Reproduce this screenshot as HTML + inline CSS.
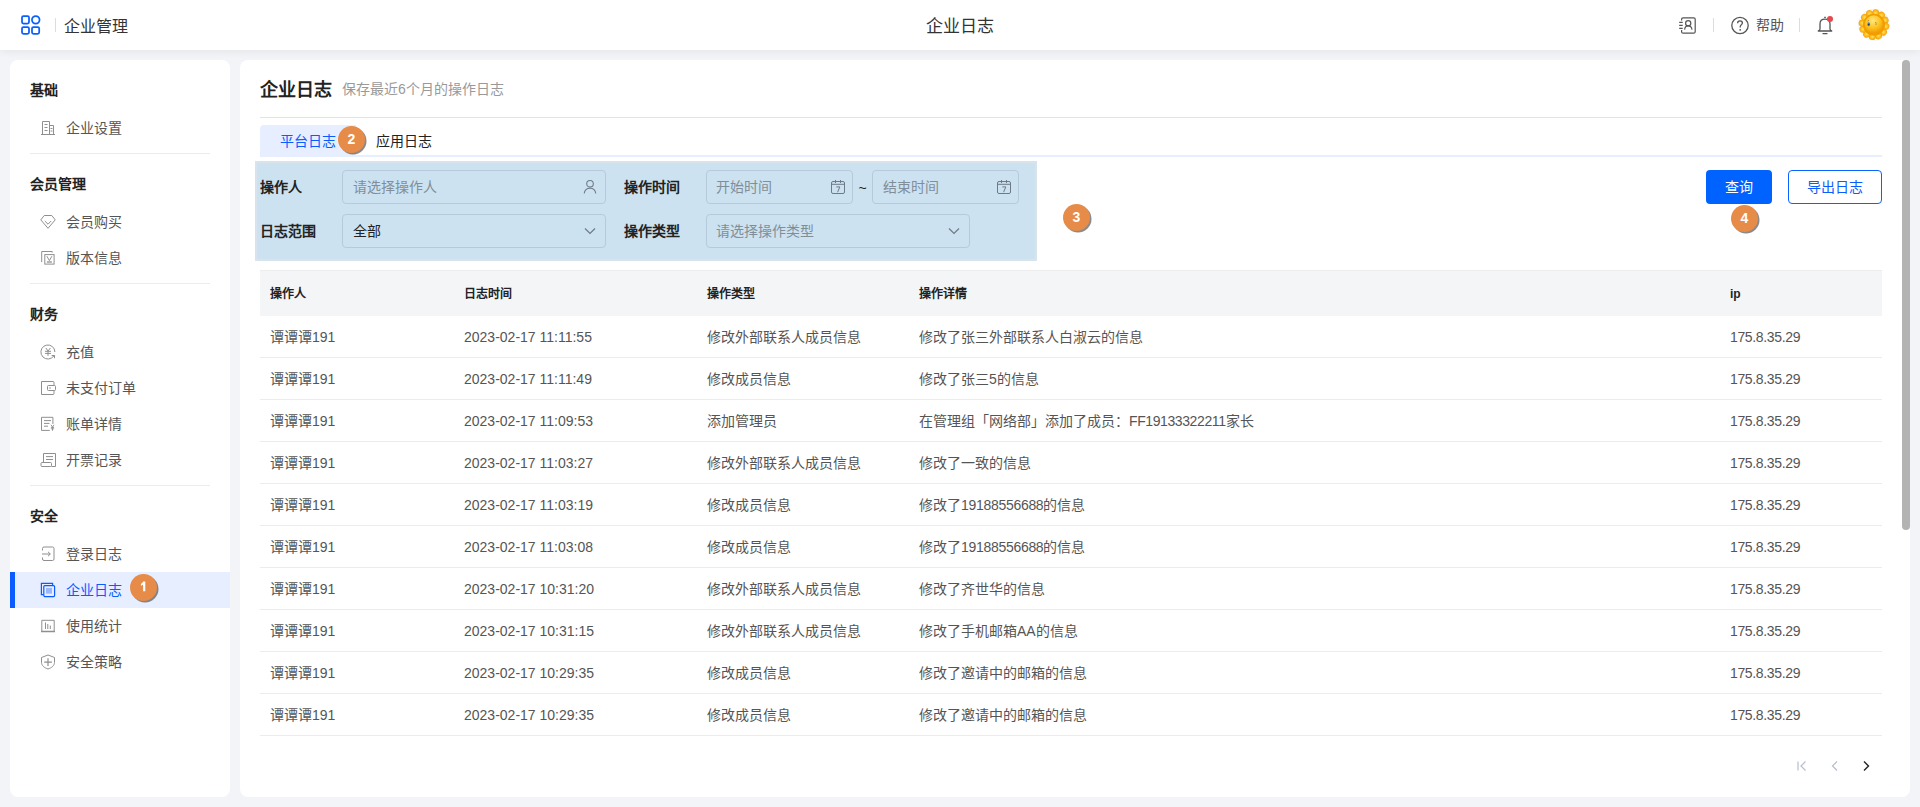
<!DOCTYPE html>
<html lang="zh-CN">
<head>
<meta charset="utf-8">
<style>
*{box-sizing:border-box;margin:0;padding:0}
html,body{width:1920px;height:807px;overflow:hidden}
body{background:#f3f4f8;font-family:"Liberation Sans",sans-serif;color:#333;position:relative}
.abs{position:absolute}
.hdr{left:0;top:0;width:1920px;height:50px;background:#fff;box-shadow:0 2px 8px rgba(0,0,0,.06)}
.t{position:absolute;white-space:nowrap;height:20px;line-height:20px}
.side{left:10px;top:60px;width:220px;height:737px;background:#fff;border-radius:8px}
.main{left:240px;top:60px;width:1670px;height:737px;background:#fff;border-radius:8px}
.sb{left:1902px;top:60px;width:8px;height:470px;background:#b3b3b3;border-radius:4px}
.sec{font-size:14px;font-weight:bold;color:#222}
.item{font-size:14px;color:#555}
.item.act{color:#0a5cff}
.div{position:absolute;height:1px;background:#ececec}
.ico{position:absolute;display:block}
.badge{position:absolute;width:27px;height:27px;border-radius:50%;background:#e68c48;color:#fff;font-size:14px;font-weight:bold;text-align:center;line-height:27px;box-shadow:1.5px 1.5px .6px rgba(60,60,60,.6)}
.lbl{font-size:14px;font-weight:bold;color:#222}
.inp{position:absolute;height:34px;border:1px solid #b5cbdc;border-radius:4px}
.ph{font-size:14px;color:#808e9a}
.th{font-size:12px;font-weight:bold;color:#222}
.td{font-size:14px;color:#555}
.ip{letter-spacing:-.35px}
</style>
</head>
<body>
<!-- header -->
<div class="abs hdr">
  <svg class="ico" style="left:21px;top:15px" width="20" height="20" viewBox="0 0 20 20" fill="none" stroke="#0a5fff" stroke-width="1.75">
    <rect x="1" y="1" width="7" height="7.6" rx="1.5"/><circle cx="14.75" cy="4.85" r="3.8"/>
    <rect x="1" y="12" width="7" height="6.8" rx="1.5"/><rect x="11" y="12" width="7.2" height="6.8" rx="1.5"/>
  </svg>
  <div class="abs" style="left:55px;top:18px;width:1px;height:14px;background:#ddd"></div>
  <div class="t" style="left:64px;top:16.5px;font-size:16px;color:#333">企业管理</div>
  <div class="t" style="left:925.5px;top:17px;font-size:17px;color:#333">企业日志</div>
  <!-- contacts icon -->
  <svg class="ico" style="left:1678px;top:16px" width="20" height="20" viewBox="0 0 20 20" fill="none" stroke="#555" stroke-width="1.2">
    <path d="M3.6 4.5V3.3Q3.6 1.8 5.1 1.8H15.7Q17.2 1.8 17.2 3.3V15.7Q17.2 17.2 15.7 17.2H5.1Q3.6 17.2 3.6 15.7V14"/>
    <path d="M1.2 6.4H4.7M1.2 9.4H4.7M1.2 12.3H4.7"/>
    <circle cx="10.2" cy="7.3" r="2.6"/><path d="M6.6 13.6C6.8 11.3 8.3 9.9 10.2 9.9C12.1 9.9 13.7 11.3 14 13.6"/>
  </svg>
  <div class="abs" style="left:1713px;top:18px;width:1px;height:14px;background:#ddd"></div>
  <svg class="ico" style="left:1730px;top:16px" width="20" height="20" viewBox="0 0 20 20" fill="none" stroke="#555" stroke-width="1.3">
    <circle cx="10" cy="9.5" r="8.2"/>
    <path d="M7.6 7.2C7.6 5.8 8.7 4.8 10 4.8C11.4 4.8 12.4 5.8 12.4 7C12.4 8.5 10.2 8.8 10.2 10.8V11.5"/>
    <circle cx="10.2" cy="13.8" r=".9" fill="#555" stroke="none"/>
  </svg>
  <div class="t" style="left:1756px;top:15px;font-size:14px;color:#555">帮助</div>
  <div class="abs" style="left:1799px;top:18px;width:1px;height:14px;background:#ddd"></div>
  <svg class="ico" style="left:1815px;top:14px" width="20" height="22" viewBox="0 0 20 22" fill="none" stroke="#555" stroke-width="1.3">
    <path d="M9.2 3.3H10.8"/>
    <path d="M5 15V10C5 6.8 7 5.2 10 5.2C13 5.2 15 6.8 15 10V15C15 16 15.6 16.4 16.7 16.8V17H3.3V16.8C4.4 16.4 5 16 5 15Z" stroke-linejoin="round"/>
    <path d="M8 19.6H12" stroke-width="1.4" stroke-linecap="round"/>
  </svg>
  <div class="abs" style="left:1827px;top:16px;width:6px;height:6px;border-radius:50%;background:#e5484d"></div>
  <!-- avatar -->
  <svg class="ico" style="left:1858px;top:9px" width="32" height="32" viewBox="0 0 32 32">
    <defs>
      <radialGradient id="gp" cx="50%" cy="45%" r="55%"><stop offset="0" stop-color="#ffe45c"/><stop offset=".55" stop-color="#fbbb1c"/><stop offset="1" stop-color="#f19400"/></radialGradient>
      <radialGradient id="gf" cx="45%" cy="30%" r="70%"><stop offset="0" stop-color="#ffe680"/><stop offset=".6" stop-color="#fbc21e"/><stop offset="1" stop-color="#f29a00"/></radialGradient>
    </defs>
    <circle cx="16" cy="15.7" r="15.6" fill="#fff" stroke="#e3edff" stroke-width=".7"/>
    <g fill="url(#gp)"><ellipse cx="16" cy="4.6" rx="3.7" ry="4.4" transform="rotate(8 16 15.7)"/><ellipse cx="16" cy="4.6" rx="3.7" ry="4.4" transform="rotate(38 16 15.7)"/><ellipse cx="16" cy="4.6" rx="3.7" ry="4.4" transform="rotate(68 16 15.7)"/><ellipse cx="16" cy="4.6" rx="3.7" ry="4.4" transform="rotate(98 16 15.7)"/><ellipse cx="16" cy="4.6" rx="3.7" ry="4.4" transform="rotate(128 16 15.7)"/><ellipse cx="16" cy="4.6" rx="3.7" ry="4.4" transform="rotate(158 16 15.7)"/><ellipse cx="16" cy="4.6" rx="3.7" ry="4.4" transform="rotate(188 16 15.7)"/><ellipse cx="16" cy="4.6" rx="3.7" ry="4.4" transform="rotate(218 16 15.7)"/><ellipse cx="16" cy="4.6" rx="3.7" ry="4.4" transform="rotate(248 16 15.7)"/><ellipse cx="16" cy="4.6" rx="3.7" ry="4.4" transform="rotate(278 16 15.7)"/><ellipse cx="16" cy="4.6" rx="3.7" ry="4.4" transform="rotate(308 16 15.7)"/><ellipse cx="16" cy="4.6" rx="3.7" ry="4.4" transform="rotate(338 16 15.7)"/></g>
    <circle cx="16" cy="15.7" r="11" fill="#f29c00"/>
    <circle cx="15.8" cy="15.3" r="9" fill="url(#gf)"/>
    <ellipse cx="10.7" cy="15.2" rx="1.3" ry="2" fill="#2f7fd0"/>
    <circle cx="10.8" cy="15.6" r=".7" fill="#10254a"/>
    <path d="M9.6 12.2L11 11.2M17 13.3L18.6 14.2M17.2 15.2H18.6" stroke="#9a6200" stroke-width=".6"/>
  </svg>
</div>
<!-- sidebar -->
<div class="abs side"></div>
<div class="t sec" style="left:30px;top:79.5px">基础</div>
<div class="t item" style="left:66px;top:118px">企业设置</div>
<svg class="ico" style="left:40px;top:120px" width="16" height="16" viewBox="0 0 16 16"><g fill="none" stroke="#8f8f8f" stroke-width="1"><path d="M2.5 14.5V1.5H9.5V14.5M9.5 5.5H13.5V14.5M1 14.5H15"/><path d="M4.5 4.5H7.5M4.5 7.5H7.5M4.5 10.5H7.5M10.5 8.5H12.5M10.5 11H12.5"/></g></svg>
<div class="div" style="left:30px;top:153px;width:180px"></div>
<div class="t sec" style="left:30px;top:173.5px">会员管理</div>
<div class="t item" style="left:66px;top:212px">会员购买</div>
<svg class="ico" style="left:40px;top:214px" width="16" height="16" viewBox="0 0 16 16"><g fill="none" stroke="#8f8f8f" stroke-width="1"><path d="M4.2 1.5H11.8L15.2 5.9L8 14.3L0.8 5.9Z"/><path d="M4.8 7L8 10.2L11.2 7"/></g></svg>
<div class="t item" style="left:66px;top:248px">版本信息</div>
<svg class="ico" style="left:40px;top:250px" width="16" height="16" viewBox="0 0 16 16"><g fill="none" stroke="#8f8f8f" stroke-width="1"><path d="M1.7 12.1V1.5H12.2V2.6"/><rect x="4.8" y="4.6" width="9.3" height="9.5"/><path d="M6.9 6.2L9.4 10.6L11.9 6.2"/><path d="M6.9 12H11.9" stroke-width="1.3"/></g></svg>
<div class="div" style="left:30px;top:283px;width:180px"></div>
<div class="t sec" style="left:30px;top:303.5px">财务</div>
<div class="t item" style="left:66px;top:342px">充值</div>
<svg class="ico" style="left:40px;top:344px" width="16" height="16" viewBox="0 0 16 16"><g fill="none" stroke="#8f8f8f" stroke-width="1"><path d="M14.9 8A7 7 0 1 0 11.4 14.06L14.5 11.5M11.6 11.5H14.5V14.2"/><path d="M5.9 4L8 7L10.4 4M5 7.3H11M5 9.4H11M8 7V11.9"/></g></svg>
<div class="t item" style="left:66px;top:378px">未支付订单</div>
<svg class="ico" style="left:40px;top:380px" width="16" height="16" viewBox="0 0 16 16"><g fill="none" stroke="#8f8f8f" stroke-width="1"><path d="M14 5.5V2.5Q14 1.5 13 1.5H1.5V14.5H13Q14 14.5 14 13.5V10.5"/><rect x="7.5" y="5.5" width="8" height="5" rx="1"/><circle cx="10" cy="8" r=".8" fill="#8f8f8f" stroke="none"/></g></svg>
<div class="t item" style="left:66px;top:414px">账单详情</div>
<svg class="ico" style="left:40px;top:416px" width="16" height="16" viewBox="0 0 16 16"><g fill="none" stroke="#8f8f8f" stroke-width="1"><path d="M9.8 14.4H1.5V1.3H12.9V8"/><path d="M4 4.6H11M4 7.4H9.5M4 10.2H8"/><path d="M11 8.8L12.5 11L14 8.8M10.9 11.4H14.1M10.9 12.8H14.1M12.5 11V14.8" stroke-width=".9"/></g></svg>
<div class="t item" style="left:66px;top:450px">开票记录</div>
<svg class="ico" style="left:40px;top:452px" width="16" height="16" viewBox="0 0 16 16"><g fill="none" stroke="#8f8f8f" stroke-width="1"><path d="M3.5 10.5V1.5H15.5V14.5H11.5"/><path d="M6 4.6H13M6 7.5H13"/><rect x="1" y="10.5" width="10.5" height="4" rx="1"/></g></svg>
<div class="div" style="left:30px;top:485px;width:180px"></div>
<div class="t sec" style="left:30px;top:505.5px">安全</div>
<div class="t item" style="left:66px;top:544px">登录日志</div>
<svg class="ico" style="left:40px;top:546px" width="16" height="16" viewBox="0 0 16 16"><g fill="none" stroke="#8f8f8f" stroke-width="1"><path d="M2.5 4.5V2.5Q2.5 1 4 1H12.5Q14 1 14 2.5V13Q14 14.5 12.5 14.5H4Q2.5 14.5 2.5 13V11.5"/><path d="M2 8H10.2M8 5.8L10.3 8L8 10.2"/></g></svg>
<div class="abs" style="left:10px;top:572px;width:220px;height:36px;background:#e6eeff"></div><div class="abs" style="left:10px;top:572px;width:5px;height:36px;background:#0a5cff"></div>
<div class="t item act" style="left:66px;top:580px">企业日志</div>
<svg class="ico" style="left:40px;top:582px" width="16" height="16" viewBox="0 0 16 16"><g fill="none" stroke="#0a5cff" stroke-width="1.2"><path d="M3.5 12.6H1.4V1.4H12.6V3.4"/><rect x="3.8" y="3.6" width="10.8" height="11" rx="1"/><rect x="6" y="6" width="6" height="5.6" fill="#9bb6fb" stroke="none"/></g></svg>
<div class="t item" style="left:66px;top:616px">使用统计</div>
<svg class="ico" style="left:40px;top:618px" width="16" height="16" viewBox="0 0 16 16"><g fill="none" stroke="#8f8f8f" stroke-width="1"><path d="M1.8 13V2.3H14.2V13"/><path d="M1 13.5H15" stroke-width="1.5"/><path d="M5.5 4.5V11M7.8 6V11M10.3 7.5V11"/></g></svg>
<div class="t item" style="left:66px;top:652px">安全策略</div>
<svg class="ico" style="left:40px;top:654px" width="16" height="16" viewBox="0 0 16 16"><g fill="none" stroke="#8f8f8f" stroke-width="1"><path d="M8 1L14.5 3.5V8.3C14.5 11.5 11.8 13.8 8 15C4.2 13.8 1.5 11.5 1.5 8.3V3.5Z"/><path d="M8 4.3V12M4.2 8.2H11.9" stroke-width="1.2"/></g></svg>
<div class="badge" style="left:130px;top:574px"><svg class="ico" style="left:0;top:0" width="27" height="27" viewBox="0 0 27 27"><path d="M13.1 7.6H15.3V17.3H13.1V10.6Q12 11.5 10.9 11.8V10.1Q12.4 9.4 13.1 7.6Z" fill="#fff"/></svg></div>

<!-- main -->
<div class="abs main"></div>
<div class="abs sb"></div>
<div class="t" style="left:260px;top:80px;font-size:18px;font-weight:bold;color:#222">企业日志</div>
<div class="t" style="left:342px;top:79px;font-size:14px;color:#999">保存最近6个月的操作日志</div>
<div class="div" style="left:260px;top:117px;width:1622px;background:#e3e3e3"></div>
<!-- tabs -->
<div class="abs" style="left:260px;top:125px;width:96px;height:32px;background:#e6eeff;border-radius:4px 0 0 0"></div>
<div class="abs" style="left:260px;top:155px;width:1622px;height:2px;background:#e6eeff"></div>
<div class="t" style="left:280px;top:131px;font-size:14px;color:#0a5cff">平台日志</div>
<div class="t" style="left:376px;top:131px;font-size:14px;color:#222">应用日志</div>
<div class="badge" style="left:338px;top:126px">2</div>
<!-- filter overlay -->
<div class="abs" style="left:255px;top:161px;width:782px;height:100px;background:#cce2f0;border:2px solid #d9e3ee"></div>
<div class="t lbl" style="left:260px;top:177px">操作人</div>
<div class="inp" style="left:342px;top:170px;width:264px"></div>
<div class="t ph" style="left:353px;top:177px">请选择操作人</div>
<svg class="ico" style="left:582px;top:179px" width="16" height="16" viewBox="0 0 16 16" fill="none" stroke="#6d7b86" stroke-width="1.1">
  <circle cx="8" cy="4.8" r="3.3"/><path d="M2.2 14.5C2.6 11 5 9.2 8 9.2C11 9.2 13.4 11 13.8 14.5"/>
</svg>
<div class="t lbl" style="left:624px;top:177px">操作时间</div>
<div class="inp" style="left:706px;top:170px;width:147px"></div>
<div class="t ph" style="left:716px;top:177px">开始时间</div>
<svg class="ico" style="left:830px;top:179px" width="16" height="16" viewBox="0 0 16 16" fill="none" stroke="#6d7b86" stroke-width="1">
  <rect x="1.5" y="2.5" width="13" height="12" rx="1.5"/><path d="M1.5 5.3H14.5M5.5 1V4M10.5 1V4"/><path d="M6.3 7.9H9.8L7.6 13.2" stroke-width="1"/>
</svg>
<div class="t" style="left:858.5px;top:178px;font-size:14px;color:#222">~</div>
<div class="inp" style="left:872px;top:170px;width:147px"></div>
<div class="t ph" style="left:883px;top:177px">结束时间</div>
<svg class="ico" style="left:996px;top:179px" width="16" height="16" viewBox="0 0 16 16" fill="none" stroke="#6d7b86" stroke-width="1">
  <rect x="1.5" y="2.5" width="13" height="12" rx="1.5"/><path d="M1.5 5.3H14.5M5.5 1V4M10.5 1V4"/><path d="M6.3 7.9H9.8L7.6 13.2" stroke-width="1"/>
</svg>
<div class="t lbl" style="left:260px;top:221px">日志范围</div>
<div class="inp" style="left:342px;top:214px;width:264px"></div>
<div class="t" style="left:353px;top:221px;font-size:14px;color:#222">全部</div>
<svg class="ico" style="left:583px;top:225px" width="14" height="12" viewBox="0 0 14 12" fill="none" stroke="#6d7b86" stroke-width="1.2"><path d="M2 3.5L7 8.5L12 3.5"/></svg>
<div class="t lbl" style="left:624px;top:221px">操作类型</div>
<div class="inp" style="left:706px;top:214px;width:264px"></div>
<div class="t ph" style="left:716px;top:221px">请选择操作类型</div>
<svg class="ico" style="left:947px;top:225px" width="14" height="12" viewBox="0 0 14 12" fill="none" stroke="#6d7b86" stroke-width="1.2"><path d="M2 3.5L7 8.5L12 3.5"/></svg>
<div class="badge" style="left:1063px;top:204px">3</div>
<!-- buttons -->
<div class="abs" style="left:1706px;top:170px;width:66px;height:34px;background:#0062ff;border-radius:4px"></div>
<div class="t" style="left:1725px;top:177px;font-size:14px;color:#fff">查询</div>
<div class="abs" style="left:1788px;top:170px;width:94px;height:34px;border:1px solid #0a62ff;border-radius:4px"></div>
<div class="t" style="left:1807px;top:177px;font-size:14px;color:#0a5cff">导出日志</div>
<div class="badge" style="left:1731px;top:205px">4</div>
<!-- table -->
<div class="abs" style="left:260px;top:270px;width:1622px;height:46px;background:#f4f5f7;border-top:1px solid #ededee"></div>
<div class="t th" style="left:270px;top:284px">操作人</div>
<div class="t th" style="left:464px;top:284px">日志时间</div>
<div class="t th" style="left:707px;top:284px">操作类型</div>
<div class="t th" style="left:919px;top:284px">操作详情</div>
<div class="t th" style="left:1730px;top:284px">ip</div>
<div class="t td" style="left:270px;top:327px">谭谭谭191</div>
<div class="t td" style="left:464px;top:327px">2023-02-17 11:11:55</div>
<div class="t td" style="left:707px;top:327px">修改外部联系人成员信息</div>
<div class="t td" style="left:919px;top:327px">修改了张三外部联系人白淑云的信息</div>
<div class="t td ip" style="left:1730px;top:327px">175.8.35.29</div>
<div class="div" style="left:260px;top:357px;width:1622px"></div>
<div class="t td" style="left:270px;top:369px">谭谭谭191</div>
<div class="t td" style="left:464px;top:369px">2023-02-17 11:11:49</div>
<div class="t td" style="left:707px;top:369px">修改成员信息</div>
<div class="t td" style="left:919px;top:369px">修改了张三5的信息</div>
<div class="t td ip" style="left:1730px;top:369px">175.8.35.29</div>
<div class="div" style="left:260px;top:399px;width:1622px"></div>
<div class="t td" style="left:270px;top:411px">谭谭谭191</div>
<div class="t td" style="left:464px;top:411px">2023-02-17 11:09:53</div>
<div class="t td" style="left:707px;top:411px">添加管理员</div>
<div class="t td" style="left:919px;top:411px">在管理组「网络部」添加了成员：<span style="letter-spacing:-.4px">FF19133322211</span>家长</div>
<div class="t td ip" style="left:1730px;top:411px">175.8.35.29</div>
<div class="div" style="left:260px;top:441px;width:1622px"></div>
<div class="t td" style="left:270px;top:453px">谭谭谭191</div>
<div class="t td" style="left:464px;top:453px">2023-02-17 11:03:27</div>
<div class="t td" style="left:707px;top:453px">修改外部联系人成员信息</div>
<div class="t td" style="left:919px;top:453px">修改了一致的信息</div>
<div class="t td ip" style="left:1730px;top:453px">175.8.35.29</div>
<div class="div" style="left:260px;top:483px;width:1622px"></div>
<div class="t td" style="left:270px;top:495px">谭谭谭191</div>
<div class="t td" style="left:464px;top:495px">2023-02-17 11:03:19</div>
<div class="t td" style="left:707px;top:495px">修改成员信息</div>
<div class="t td" style="left:919px;top:495px">修改了<span style="letter-spacing:-.3px">19188556688</span>的信息</div>
<div class="t td ip" style="left:1730px;top:495px">175.8.35.29</div>
<div class="div" style="left:260px;top:525px;width:1622px"></div>
<div class="t td" style="left:270px;top:537px">谭谭谭191</div>
<div class="t td" style="left:464px;top:537px">2023-02-17 11:03:08</div>
<div class="t td" style="left:707px;top:537px">修改成员信息</div>
<div class="t td" style="left:919px;top:537px">修改了<span style="letter-spacing:-.3px">19188556688</span>的信息</div>
<div class="t td ip" style="left:1730px;top:537px">175.8.35.29</div>
<div class="div" style="left:260px;top:567px;width:1622px"></div>
<div class="t td" style="left:270px;top:579px">谭谭谭191</div>
<div class="t td" style="left:464px;top:579px">2023-02-17 10:31:20</div>
<div class="t td" style="left:707px;top:579px">修改外部联系人成员信息</div>
<div class="t td" style="left:919px;top:579px">修改了齐世华的信息</div>
<div class="t td ip" style="left:1730px;top:579px">175.8.35.29</div>
<div class="div" style="left:260px;top:609px;width:1622px"></div>
<div class="t td" style="left:270px;top:621px">谭谭谭191</div>
<div class="t td" style="left:464px;top:621px">2023-02-17 10:31:15</div>
<div class="t td" style="left:707px;top:621px">修改外部联系人成员信息</div>
<div class="t td" style="left:919px;top:621px">修改了手机邮箱AA的信息</div>
<div class="t td ip" style="left:1730px;top:621px">175.8.35.29</div>
<div class="div" style="left:260px;top:651px;width:1622px"></div>
<div class="t td" style="left:270px;top:663px">谭谭谭191</div>
<div class="t td" style="left:464px;top:663px">2023-02-17 10:29:35</div>
<div class="t td" style="left:707px;top:663px">修改成员信息</div>
<div class="t td" style="left:919px;top:663px">修改了邀请中的邮箱的信息</div>
<div class="t td ip" style="left:1730px;top:663px">175.8.35.29</div>
<div class="div" style="left:260px;top:693px;width:1622px"></div>
<div class="t td" style="left:270px;top:705px">谭谭谭191</div>
<div class="t td" style="left:464px;top:705px">2023-02-17 10:29:35</div>
<div class="t td" style="left:707px;top:705px">修改成员信息</div>
<div class="t td" style="left:919px;top:705px">修改了邀请中的邮箱的信息</div>
<div class="t td ip" style="left:1730px;top:705px">175.8.35.29</div>
<div class="div" style="left:260px;top:735px;width:1622px"></div>
<!-- pagination -->
<svg class="ico" style="left:1795px;top:759px" width="14" height="14" viewBox="0 0 14 14" fill="none" stroke="#b8bfcc" stroke-width="1.2"><path d="M3 2.5V11.5M10.5 2.5L6 7L10.5 11.5"/></svg>
<svg class="ico" style="left:1828px;top:759px" width="14" height="14" viewBox="0 0 14 14" fill="none" stroke="#b8bfcc" stroke-width="1.2"><path d="M9 2.5L4.5 7L9 11.5"/></svg>
<svg class="ico" style="left:1859px;top:759px" width="14" height="14" viewBox="0 0 14 14" fill="none" stroke="#222" stroke-width="1.4"><path d="M5 2.5L9.5 7L5 11.5"/></svg>
</body>
</html>
